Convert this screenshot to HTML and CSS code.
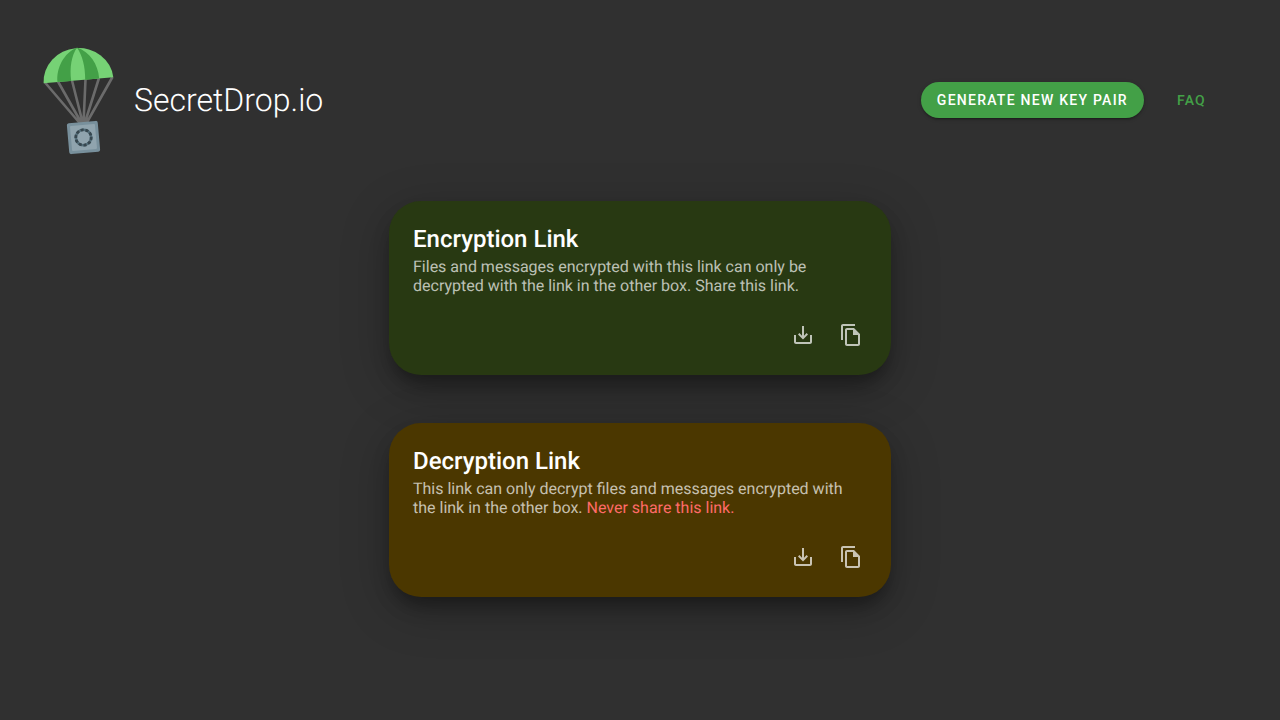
FILE: index.html
```html
<!DOCTYPE html>
<html lang="en">
<head>
<meta charset="utf-8">
<title>SecretDrop.io</title>
<link rel="stylesheet" href="styles.css">
</head>
<body>
<header class="header">
  <a class="brand">
    <svg class="logo" viewBox="0 0 80 112" width="80" height="112">
      <g class="cords">
        <path d="M6 38.500L41.500 80M19 37.500L43 80M33 36.500L44 80M46.500 35.500L44.500 80M60 34L45.500 80M73.500 33L47 80"/>
      </g>
      <path class="canopy-light" d="M4.600 39.300A35 33.200 -5 0 1 74.300 33.200Z"/>
      <path class="canopy-dark" d="M18.500 38.100C17 24 25 9 38 3.500C32.500 12 30.500 23 32.200 36.900ZM38 3.500C51 8 59 20 60.200 34.400L46.200 35.700C46.200 22 43.500 12 38 3.500Z"/>
      <g transform="translate(44.500 93.500) rotate(-5)">
        <rect class="box-edge" x="-15.500" y="-15.500" width="31" height="31" rx="2"/>
        <rect class="box-face" x="-12.500" y="-12.500" width="25" height="25" rx="1"/>
        <circle class="dial" r="7.700"/>
        <circle class="dial-marks" r="7.700"/>
      </g>
    </svg>
    <span class="brand-name">SecretDrop.io</span>
  </a>
  <nav class="nav">
    <button class="button button-primary">Generate new key pair</button>
    <a class="button button-text">FAQ</a>
  </nav>
</header>
<main class="cards">
  <section class="card card-encrypt">
    <h2 class="card-title">Encryption Link</h2>
    <p class="card-text">Files and messages encrypted with this link can only be decrypted with the link in the other box. Share this link.</p>
    <div class="actions">
      <button class="icon-button" aria-label="Download"><svg class="icon" viewBox="0 0 24 24"><path d="M19 12v7H5v-7H3v7c0 1.100.900 2 2 2h14c1.100 0 2-.900 2-2v-7h-2zm-6 .670l2.590-2.580L17 11.500l-5 5-5-5 1.410-1.410L11 12.670V3h2v9.670z"/></svg></button>
      <button class="icon-button" aria-label="Copy"><svg class="icon" viewBox="0 0 24 24"><path d="M16 1H4c-1.100 0-2 .900-2 2v14h2V3h12V1zm-1 4H8c-1.100 0-1.990.900-1.990 2L6 21c0 1.100.890 2 1.990 2H19c1.100 0 2-.900 2-2V11l-6-6zM8 21V7h6v5h5v9H8z"/></svg></button>
    </div>
  </section>
  <section class="card card-decrypt">
    <h2 class="card-title">Decryption Link</h2>
    <p class="card-text">This link can only decrypt files and messages encrypted with the link in the other box. <span class="warning">Never share this link.</span></p>
    <div class="actions">
      <button class="icon-button" aria-label="Download"><svg class="icon" viewBox="0 0 24 24"><path d="M19 12v7H5v-7H3v7c0 1.100.900 2 2 2h14c1.100 0 2-.900 2-2v-7h-2zm-6 .670l2.590-2.580L17 11.500l-5 5-5-5 1.410-1.410L11 12.670V3h2v9.670z"/></svg></button>
      <button class="icon-button" aria-label="Copy"><svg class="icon" viewBox="0 0 24 24"><path d="M16 1H4c-1.100 0-2 .900-2 2v14h2V3h12V1zm-1 4H8c-1.100 0-1.990.900-1.990 2L6 21c0 1.100.890 2 1.990 2H19c1.100 0 2-.900 2-2V11l-6-6zM8 21V7h6v5h5v9H8z"/></svg></button>
    </div>
  </section>
</main>
</body>
</html>
```

FILE: styles.css
```css
* { box-sizing: border-box; }
body {
  margin: 0;
  min-height: 720px;
  background: #303030;
  color: #fff;
  font-family: Roboto, sans-serif;
  text-rendering: geometricPrecision;
}
.header {
  display: flex;
  align-items: center;
  justify-content: space-between;
  height: 201px;
  padding: 0 58px 1px 39px;
}
.brand { display: flex; align-items: center; gap: 15px; }
.logo { display: block; }
.cords path { fill: none; stroke: #6b6b6b; stroke-width: 2.6; }
.canopy-light { fill: #76d275; }
.canopy-dark { fill: #43a047; }
.box-edge { fill: #78909c; }
.box-face { fill: #90a4ae; }
.dial { fill: none; stroke: #546e7a; stroke-width: 2.6; }
.dial-marks { fill: none; stroke: #37474f; stroke-width: 2.8; stroke-dasharray: 3 1.838; }
.brand-name { font-size: 32px; font-weight: 300; line-height: 40px; }
.nav { display: flex; align-items: center; gap: 17px; }
.button {
  height: 36px;
  padding: 0 16px;
  border: 0;
  border-radius: 18px;
  font: 500 14px/36px Roboto, sans-serif;
  letter-spacing: 1.25px;
  text-transform: uppercase;
  white-space: nowrap;
}
.button-primary {
  background: #43a047;
  color: #fff;
  box-shadow: 0 3px 1px -2px rgba(0,0,0,.2), 0 2px 2px rgba(0,0,0,.14), 0 1px 5px rgba(0,0,0,.12);
}
.button-text { color: #43a047; line-height: 38px; }
.cards { display: flex; flex-direction: column; align-items: center; gap: 48px; }
.card {
  width: 502px;
  height: 174px;
  padding: 24px 16px 16px 24px;
  border-radius: 32px;
  box-shadow: 0 12px 18px -4px rgba(0,0,0,.36), 0 12px 46px 6px rgba(0,0,0,.18);
}
.card-encrypt { background: #283912; }
.card-decrypt { background: #4b3700; }
.card-title { margin: 0; font-size: 24px; font-weight: 500; line-height: 28px; }
.card-text {
  width: 440px;
  margin: 4px 0 0;
  color: rgba(255,255,255,.7);
  font-size: 16px;
  line-height: 19px;
}
.warning { color: #ff6b68; }
.actions { display: flex; justify-content: flex-end; margin-top: 16px; }
.icon-button { width: 48px; height: 48px; padding: 12px; border: 0; background: none; color: rgba(255,255,255,.7); }
.icon { display: block; width: 24px; height: 24px; fill: currentColor; }
```
